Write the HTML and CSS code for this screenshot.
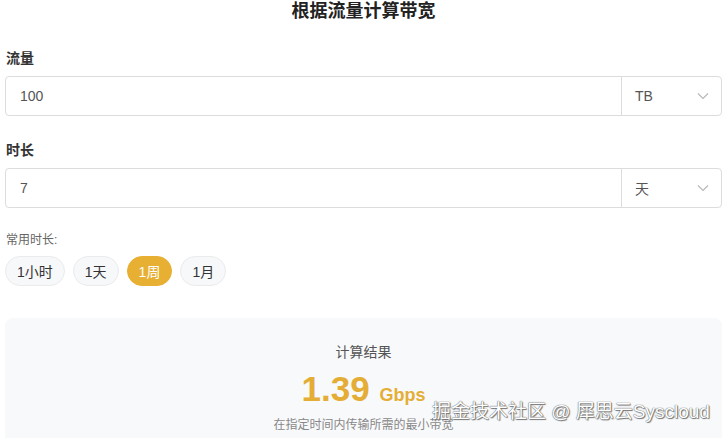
FILE: index.html
```html
<!DOCTYPE html>
<html lang="zh-CN">
<head>
    <meta charset="UTF-8">
    <meta name="viewport" content="width=device-width, initial-scale=1.0">
    <title>根据流量计算带宽</title>
    <link rel="stylesheet" href="styles.css">
</head>
<body>
    <div class="container">
        <h1>根据流量计算带宽</h1>

        <label for="traffic">流量</label>
        <div class="input-group">
            <input type="text" id="traffic" value="100">
            <div class="unit-select">
                <span>TB</span>
                <svg class="chevron" width="12" height="8" viewBox="0 0 12 8"><path d="M1 1.5 L6 6.5 L11 1.5" fill="none" stroke="#b8b8b8" stroke-width="1.2"/></svg>
            </div>
        </div>

        <label for="duration">时长</label>
        <div class="input-group">
            <input type="text" id="duration" value="7">
            <div class="unit-select">
                <span>天</span>
                <svg class="chevron" width="12" height="8" viewBox="0 0 12 8"><path d="M1 1.5 L6 6.5 L11 1.5" fill="none" stroke="#b8b8b8" stroke-width="1.2"/></svg>
            </div>
        </div>

        <div class="presets">
            <p class="presets-title">常用时长:</p>
            <div class="pill-row">
                <button class="pill">1小时</button>
                <button class="pill">1天</button>
                <button class="pill active">1周</button>
                <button class="pill">1月</button>
            </div>
        </div>

        <div class="result">
            <div class="result-title">计算结果</div>
            <div class="result-value">1.39 <span class="result-unit">Gbps</span></div>
            <div class="result-note">在指定时间内传输所需的最小带宽</div>
        </div>
    </div>

    <div class="watermark">掘金技术社区 @ 犀思云Syscloud</div>
</body>
</html>
```

FILE: styles.css
```css
body {
    font-family: "Liberation Sans", "Noto Sans CJK SC", sans-serif;
    margin: 0;
    padding: 0;
    background-color: #ffffff;
    color: #333;
}
.container {
    padding: 0 6px 0 5px;
}
h1 {
    margin: 0;
    padding: 1px 0 3px;
    font-size: 18px;
    line-height: 20px;
    text-align: center;
    color: #222;
}

label {
    display: block;
    margin: 24px 0 8px 1px;
    font-size: 14px;
    line-height: 20px;
    font-weight: bold;
    color: #333;
}
.input-group {
    display: flex;
    height: 40px;
    border: 1px solid #dcdcdc;
    border-radius: 4px;
    box-sizing: border-box;
}
.input-group input {
    flex: 1;
    min-width: 0;
    border: none;
    outline: none;
    padding: 0 14px;
    font-family: inherit;
    font-size: 14px;
    color: #555;
    background: transparent;
}
.unit-select {
    width: 100px;
    display: flex;
    align-items: center;
    justify-content: space-between;
    padding: 0 12px 0 13px;
    box-sizing: border-box;
    border-left: 1px solid #dcdcdc;
    font-size: 14px;
    color: #555;
}

.presets {
    margin-top: 23px;
}
.presets-title {
    margin: 0 0 7px 1px;
    font-size: 12px;
    line-height: 18px;
    color: #666;
}
.pill-row {
    display: flex;
    gap: 8px;
}
.pill {
    height: 30px;
    padding: 0 11px;
    border: 1px solid #ebebeb;
    border-radius: 15px;
    background-color: #f7f8fa;
    font-family: inherit;
    font-size: 14px;
    color: #333;
    cursor: pointer;
}
.pill.active {
    background-color: #e8b032;
    border-color: #e8b032;
    color: #fff;
}

.result {
    margin-top: 32px;
    padding: 24px 0 20px;
    background-color: #f8f9fb;
    border-radius: 8px;
    text-align: center;
}
.result-title {
    font-size: 14px;
    line-height: 20px;
    color: #555;
}
.result-value {
    margin-top: 6px;
    font-size: 35px;
    line-height: 42px;
    font-weight: bold;
    color: #e4ae36;
}
.result-unit {
    font-size: 18px;
}
.result-note {
    margin-top: 0;
    font-size: 12px;
    line-height: 18px;
    color: #888;
}

.watermark {
    position: absolute;
    left: 432px;
    top: 399px;
    font-family: "Liberation Sans", "Noto Sans CJK SC", sans-serif;
    font-size: 19px;
    line-height: 26px;
    color: #fff;
    text-shadow: 0 0 1px #666, 0 0 1px #666, 1px 1px 1px #777;
    white-space: nowrap;
}
```
